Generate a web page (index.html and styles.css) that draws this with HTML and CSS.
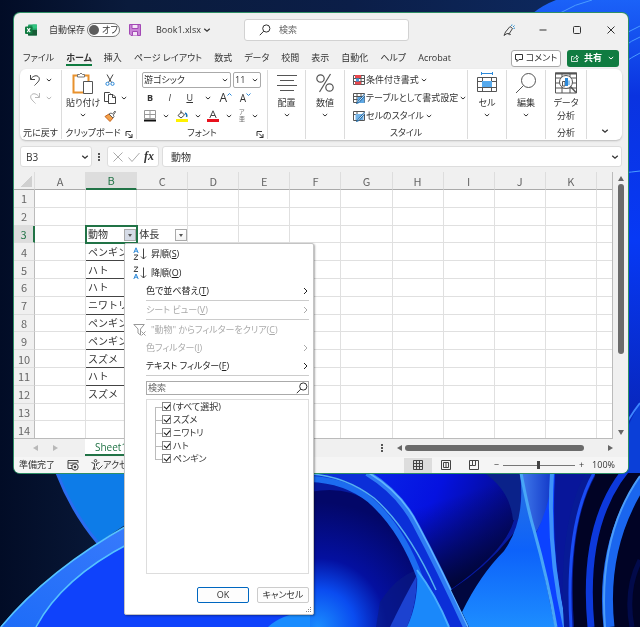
FILE: index.html
```html
<!DOCTYPE html>
<html lang="ja">
<head>
<meta charset="utf-8">
<title>Book1.xlsx</title>
<link rel="stylesheet" href="styles.css">
</head>
<body>
<svg class="wallpaper" viewBox="0 0 640 627" preserveAspectRatio="xMidYMid slice" aria-hidden="true">
  <defs>
    <linearGradient id="base" x1="0" x2="1" y1="0" y2="0"><stop offset="0" stop-color="#020c26"/><stop offset=".2" stop-color="#0a1b3c"/><stop offset=".55" stop-color="#0b1e48"/><stop offset="1" stop-color="#0e2c66"/></linearGradient>
    <linearGradient id="side" x1="0" x2="0" y1="0" y2="1"><stop offset="0" stop-color="#1b62f8"/><stop offset=".2" stop-color="#0a33e0"/><stop offset=".5" stop-color="#0739f5"/><stop offset="1" stop-color="#0820a8"/></linearGradient>
    <linearGradient id="petal" x1="0" x2="1" y1="1" y2="0"><stop offset="0" stop-color="#1d6cf8"/><stop offset="1" stop-color="#4f86ff"/></linearGradient>
    <radialGradient id="deep" gradientUnits="userSpaceOnUse" cx="318" cy="627" r="125"><stop offset="0" stop-color="#1a8cff"/><stop offset=".3" stop-color="#0a4cf0"/><stop offset=".55" stop-color="#0410a0"/><stop offset="1" stop-color="#030768"/></radialGradient>
    <linearGradient id="fold" x1="0" x2="1" y1="0" y2=".4"><stop offset="0" stop-color="#0824e8"/><stop offset=".45" stop-color="#0512e0"/><stop offset="1" stop-color="#050a80"/></linearGradient>
    <linearGradient id="foldshade" x1=".2" x2=".6" y1="0" y2="1"><stop offset=".3" stop-color="#00054a" stop-opacity="0"/><stop offset="1" stop-color="#00052e"/></linearGradient>
    <linearGradient id="bright" x1="0" x2="0" y1="0" y2="1"><stop offset="0" stop-color="#2a73e0"/><stop offset=".5" stop-color="#0d62fa"/><stop offset="1" stop-color="#1d8dff"/></linearGradient>
    <linearGradient id="haze" x1="0" x2="1" y1="0" y2="0"><stop offset="0" stop-color="#3f78ea"/><stop offset="1" stop-color="#1238c8"/></linearGradient>
  </defs>
  <rect width="640" height="627" fill="url(#base)"/>
  <path d="M533 13 Q543 5 556 0H640V480H500Z" fill="url(#side)"/>
  <path d="M560 13Q575 4 592 0M620 38Q630 30 640 26M622 48Q632 40 640 37M622 64Q632 57 640 53M622 173Q632 172 640 171" fill="none" stroke="#4a9cff" stroke-width="1"/>
  <path d="M57 473Q72 512 98 543L140 515V473Z" fill="#0d7ce8"/>
  <path d="M57 473Q72 512 98 543" fill="none" stroke="#2b6df0" stroke-width="3"/>
  <path d="M0 627Q48 570 130 524V473H320V627Z" fill="url(#petal)"/>
  <path d="M36 627Q62 578 130 543L320 480V627Z" fill="#0f42fb"/>
  <path d="M1 627Q48 570 130 524M36 627Q62 578 130 543" fill="none" stroke="#55c3ff" stroke-width="1.5"/>
  <path d="M268 627Q280 615 310 610H330V627Z" fill="#1a8cff"/>
  <rect x="310" y="470" width="330" height="157" fill="#071aa0"/>
  <path d="M370 473H500Q518 500 514 520Q505 552 450 590Q430 560 408 520Q390 488 370 473Z" fill="url(#fold)"/>
  <path d="M370 473H500Q518 500 514 520Q505 552 450 590Q430 560 408 520Q390 488 370 473Z" fill="url(#foldshade)"/>
  <path d="M484 473H520V520L513 520Q510 490 484 473Z" fill="#0a228a"/>
  <path d="M310 473H367Q400 493 416 525Q440 570 466 627H407Q417 600 417 572Q400 520 370 502Q345 483 310 481Z" fill="#0b2fd8"/>
  <path d="M310 492Q345 485 370 502Q400 525 417 572Q418 602 407 627H310Z" fill="url(#deep)"/>
  <path d="M380 602Q396 577 417 570Q418 602 407 627H376Z" fill="#0a1a80" opacity=".6"/>
  <path d="M417 575Q405 596 390 627H407Q417 605 417 575Z" fill="#1c42d0"/>
  <path d="M310 479Q345 480 370 500Q402 528 420 578" fill="none" stroke="#1c6cf0" stroke-width="6"/>
  <path d="M310 474Q345 476 374 498Q408 528 436 590" fill="none" stroke="#55b0f0" stroke-width="1.5"/>
  <path d="M367 473Q400 493 416 525Q440 570 466 627" fill="none" stroke="#2f7cf5" stroke-width="6"/>
  <path d="M369 473Q402 493 418 525Q442 570 468 627" fill="none" stroke="#62b6ff" stroke-width="1.500"/>
  <path d="M417 570Q436 595 449 627H407Q419 602 417 570Z" fill="#1a88fa"/>
  <path d="M417 570Q436 595 449 627" fill="none" stroke="#48adff" stroke-width="2"/>
  <path d="M451 590Q490 565 516 530L520 627H469Z" fill="#01073f"/>
  <path d="M520 473Q526 520 504 551Q480 575 462 612L469 627H555Q545 580 534 520Q528 490 523 473Z" fill="url(#bright)"/>
  <path d="M522 473H552Q552 510 534 535Z" fill="url(#haze)"/>
  <path d="M552 473Q550 508 535 535Q550 590 557 627H567Q550 560 555 473Z" fill="#0c42ff"/>
  <path d="M521 473Q528 510 534 530Q548 580 556 627" fill="none" stroke="#48a6f7" stroke-width="3"/>
  <path d="M552 473Q547 550 565 627" fill="none" stroke="#3d92fa" stroke-width="4"/>
  <path d="M556 473H595Q562 530 566 627Q552 550 556 473Z" fill="#08169a"/>
  <path d="M595 473H640V627H566Q558 540 595 473Z" fill="#010325"/>
  <path d="M591 473Q562 525 569 627" fill="none" stroke="#071a96" stroke-width="10"/>
  <path d="M594 473Q565 525 571 627" fill="none" stroke="#1a4df5" stroke-width="3"/>
  <path d="M640 455Q580 510 591 627" fill="none" stroke="#0d39dc" stroke-width="7"/>
  <path d="M643 480Q600 545 609 627" fill="none" stroke="#1a66ef" stroke-width="11"/>
  <path d="M640 476Q598 535 605 627" fill="none" stroke="#4b9dfa" stroke-width="2"/>
  <path d="M640 403Q618 440 618 473H640Z" fill="#0b3fd8"/>
  <path d="M640 403Q628 418 618 440" fill="none" stroke="#3d86ff" stroke-width="2"/>
  <path d="M640 560Q625 590 632 627" fill="none" stroke="#020a4a" stroke-width="5"/>
</svg>

<svg class="defs" aria-hidden="true">
  <symbol id="chev" viewBox="0 0 8 8"><path d="M1.800 3 4 5 6.200 3" fill="none" stroke="currentColor"/></symbol>
  <symbol id="lens" viewBox="0 0 12 12"><circle cx="7.3" cy="4.5" r="3.6" fill="none" stroke="currentColor"/><path d="M4.7 7.2.8 11.2" stroke="currentColor"/></symbol>
  <symbol id="launch" viewBox="0 0 8 8"><path d="M1 6V1.5h5M3 3.5l4 4M7 4v3.500H3.500" fill="none" stroke="currentColor"/></symbol>
</svg>

<main class="window">
  <header class="title">
    <div class="title-left">
      <svg class="i12" viewBox="0 0 12 12"><rect x="3" y=".5" width="9" height="11" rx="1" fill="#21a366"/><path d="M7.500.5H12v4H7.500z" fill="#33c481"/><path d="M3 6h9v5.500H3z" fill="#185c37"/><rect y="2.500" width="7.500" height="7.500" rx="1" fill="#107c41"/><path d="m2.200 4.200 3 4m0-4-3 4" stroke="#fff" stroke-width="1.100"/></svg>
      <label class="auto"><span>自動保存</span><input type="checkbox" class="switch-input"><span class="switch"><i></i><span>オフ</span></span></label>
      <button class="plain" aria-label="上書き保存"><svg class="i12" viewBox="0 0 12 12"><path d="M.5.5h11v11H2L.5 10z" fill="#c884d6" stroke="#a349b5"/><path d="M3 .5h6v4H3zM3.500 11.500v-4h5v4" fill="#f3e6f6" stroke="#a349b5"/></svg></button>
      <button class="plain book">Book1.xlsx <svg class="i10"><use href="#chev"/></svg></button>
    </div>
    <label class="search"><svg class="i12"><use href="#lens"/></svg><input type="text" aria-label="検索" placeholder="検索"></label>
    <div class="title-right">
      <button class="plain" aria-label="ペン"><svg class="i12" viewBox="0 0 12 12"><path d="M1 11.500 2.500 8 7 2.500l2.500 2L6 10l-2-.5zM5 9c1 2 2 2 3 1" fill="none" stroke="#444"/><path d="M8.500 2 9 .5M10 3l1.500-1.500M10.500 4.500l1.500-.5" stroke="#2b8fd0"/></svg></button>
      <button class="plain" aria-label="最小化"><svg class="i12" viewBox="0 0 12 12"><path d="M2.500 6h7" stroke="#333"/></svg></button>
      <button class="plain" aria-label="最大化"><svg class="i12" viewBox="0 0 12 12"><rect x="2.500" y="2.500" width="7" height="7" rx="1" fill="none" stroke="#333"/></svg></button>
      <button class="plain" aria-label="閉じる"><svg class="i12" viewBox="0 0 12 12"><path d="m2.500 2.500 7 7m0-7-7 7" stroke="#333"/></svg></button>
    </div>
  </header>

  <nav class="tabs">
    <a href="#">ファイル</a><a href="#" class="on">ホーム</a><a href="#">挿入</a><a href="#">ページ レイアウト</a><a href="#">数式</a><a href="#">データ</a><a href="#">校閲</a><a href="#">表示</a><a href="#">自動化</a><a href="#">ヘルプ</a><a href="#">Acrobat</a>
    <button class="comment"><svg class="i8" viewBox="0 0 8 8"><path d="M.5.5h7v5H4l-2 2v-2H.5z" fill="none" stroke="#333"/></svg>コメント</button>
    <button class="share"><svg class="i8" viewBox="0 0 8 8"><path d="M2.500 2.500h-2v5h6v-2M2.500 5.500q.5-2.500 3-2.500V1.200L7.500 3.500 5.500 5.500V4.200" fill="none" stroke="#fff" stroke-width=".8"/></svg>共有<svg class="i8"><use href="#chev"/></svg></button>
  </nav>

  <section class="ribbon">
    <div class="group">
      <div class="body">
        <div class="row center"><svg class="i12" viewBox="0 0 12 12"><path d="M1.500 1v4.500H6M1.700 5.200C4 1.500 8 .7 9.800 3.200 11.500 6 9 8 5.500 11.500" fill="none" stroke="#444"/></svg><svg class="i8"><use href="#chev"/></svg></div>
        <div class="row center off"><svg class="i12" viewBox="0 0 12 12"><path d="M10.500 1v4.500H6M10.300 5.200C8 1.500 4 .7 2.200 3.200.5 6 3 8 6.500 11.500" fill="none" stroke="currentColor"/></svg><svg class="i8"><use href="#chev"/></svg></div>
      </div>
      <footer>元に戻す</footer>
    </div>
    <div class="group">
      <div class="body clip">
        <button class="big"><svg class="i22" viewBox="0 0 22 22"><rect x="1.500" y="3.500" width="15" height="17" fill="#fff" stroke="#e8912d" stroke-width="2"/><path d="M5.500 5V2.500h2q1.500-3 3 0h2V5z" fill="#fff" stroke="#777"/><path d="M11.500 9.500h9v12h-9z" fill="#fff" stroke="#555"/></svg><span>貼り付け</span><svg class="i8"><use href="#chev"/></svg></button>
        <div class="stack">
          <div class="row"><svg class="i12" viewBox="0 0 12 12"><path d="m3 .5 4.500 8M9 .5l-4.500 8" stroke="#444"/><circle cx="3.500" cy="9.800" r="1.600" fill="none" stroke="#2b88d8"/><circle cx="8.500" cy="9.800" r="1.600" fill="none" stroke="#2b88d8"/></svg></div>
          <div class="row"><svg class="i12" viewBox="0 0 12 12"><path d="M4 9.500H.5v-9h5l1 1M4.500 2.500H9l2.500 2.500v6.500h-7zM8.500 2.500V5.500h3" fill="none" stroke="#444"/></svg><svg class="i8"><use href="#chev"/></svg></div>
          <div class="row"><svg class="i12" viewBox="0 0 12 12"><path d="M1 6.500 5 4l4 4-3 3.500z" fill="#f2a04a" stroke="#c8641a"/><path d="m5 4 2-1 1.500 1L11 1l.5 1L9.300 5 10 6.500 9 8z" fill="#fff" stroke="#444" stroke-width=".8"/></svg></div>
        </div>
      </div>
      <footer class="with-launch">クリップボード<svg class="i8 launch"><use href="#launch"/></svg></footer>
    </div>
    <div class="group">
      <div class="body font">
        <div class="row selects">
          <label class="pick wide"><select aria-label="フォント"><option>游ゴシック</option></select><svg class="i8"><use href="#chev"/></svg></label>
          <label class="pick"><select aria-label="サイズ"><option>11</option></select><svg class="i8"><use href="#chev"/></svg></label>
        </div>
        <div class="row tools"><button class="plain b">B</button><button class="plain it">I</button><button class="plain u">U</button><svg class="i8"><use href="#chev"/></svg><button class="plain a">A<svg class="i5" viewBox="0 0 5 5"><path d="M.5 3.500l2-2 2 2" fill="none" stroke="#2b88d8"/></svg></button><button class="plain a small">A<svg class="i5" viewBox="0 0 5 5"><path d="M.5 1.500l2 2 2-2" fill="none" stroke="#2b88d8"/></svg></button><span></span></div>
        <div class="row tools">
          <svg class="i12" viewBox="0 0 12 12"><path d="M.5.500h11v8H.5zM6 .5v8M.5 4.500h11" fill="none" stroke="#999"/><path d="M0 10.500h12" stroke="#111" stroke-width="2"/></svg><svg class="i8"><use href="#chev"/></svg>
          <svg class="i12" viewBox="0 0 12 12"><path d="M2 5.500 5.500 2 8.500 5 5 8zM5 .5v3" fill="#fff" stroke="#444"/><path d="M9 3q2.500 1 1.500 4" fill="none" stroke="#1673b8" stroke-width="1.500"/><path d="M0 10.500h12" stroke="#fff200" stroke-width="3"/></svg><svg class="i8"><use href="#chev"/></svg>
          <svg class="i12" viewBox="0 0 12 12"><path d="M2.800 8 6 .8 9.200 8M4 5.500h4" fill="none" stroke="#444"/><path d="M0 10.500h12" stroke="#e8101c" stroke-width="3"/></svg><svg class="i8"><use href="#chev"/></svg>
          <span class="ruby"><span>ア</span><span>亜</span></span><svg class="i8"><use href="#chev"/></svg>
        </div>
      </div>
      <footer>フォント<svg class="i8 launch"><use href="#launch"/></svg></footer>
    </div>
    <div class="group">
      <button class="big"><svg class="i22" viewBox="0 0 22 22"><path d="M1 3.500h20M4 8.500h14M1 13.500h20M4 18.500h14" stroke="#555"/></svg><span>配置</span><svg class="i8"><use href="#chev"/></svg></button>
    </div>
    <div class="group">
      <button class="big"><svg class="i22" viewBox="0 0 22 22"><circle cx="6.500" cy="6.500" r="3.700" fill="none" stroke="#555" stroke-width="1.200"/><circle cx="15.500" cy="15.500" r="3.700" fill="none" stroke="#555" stroke-width="1.200"/><path d="M16.500 2 5.500 20" stroke="#555" stroke-width="1.200"/></svg><span>数値</span><svg class="i8"><use href="#chev"/></svg></button>
    </div>
    <div class="group">
      <div class="body styles">
        <div class="row"><svg class="i12" viewBox="0 0 12 12"><path d="M.5 1.500h11v9H.5zM.5 4.500h11M.5 7.500h11M4 1.500v9M8 1.500v9" fill="#fff" stroke="#555"/><path d="M2 1h6v3H2zM2 7.500h6v3H2z" fill="#e9474e"/><path d="M3 4.500h3v3H3z" fill="#4a9be0"/></svg>条件付き書式<svg class="i8"><use href="#chev"/></svg></div>
        <div class="row"><svg class="i12" viewBox="0 0 12 12"><path d="M.5 1.500h11v9H.5zM.5 4.500h11M.5 7.500h11M4 1.500v9M8 1.500v9" fill="#fff" stroke="#555"/><path d="M4.500 5h7v6h-7z" fill="#5fa8e4"/><path d="M11.500 2 5 9.500l-1.500 2 2.500-1L12 3.500" fill="#fff" stroke="#1764a5"/></svg>テーブルとして書式設定<svg class="i8"><use href="#chev"/></svg></div>
        <div class="row"><svg class="i12" viewBox="0 0 12 12"><path d="M.5 1.500h11v9H.5zM.5 4.500h11M4 1.500v9" fill="#fff" stroke="#555"/><path d="M2.500 4h8v6h-8z" fill="#76b5e8"/><path d="M11.500 2 5 9.500l-1.500 2 2.500-1L12 3.500" fill="#fff" stroke="#1764a5"/></svg>セルのスタイル<svg class="i8"><use href="#chev"/></svg></div>
      </div>
      <footer>スタイル</footer>
    </div>
    <div class="group">
      <button class="big"><svg class="i22" viewBox="0 0 22 22"><path d="M1.500 5.500h19v14h-19zM1.500 9.500h19M1.500 15.500h19M6.500 5.500v14M15.500 5.500v14" fill="#fff" stroke="#555"/><path d="M6 9h10v6H6z" fill="#56a9ec"/><path d="M5.500 1.500h11M5.500 0v3M16.500 0v3" stroke="#2b88d8"/></svg><span>セル</span><svg class="i8"><use href="#chev"/></svg></button>
    </div>
    <div class="group">
      <button class="big"><svg class="i22" viewBox="0 0 22 22"><circle cx="13.500" cy="8.500" r="7" fill="none" stroke="#555"/><path d="M8.500 13.500 1 21" stroke="#555"/></svg><span>編集</span><svg class="i8"><use href="#chev"/></svg></button>
    </div>
    <div class="group">
      <button class="big"><svg class="i22" viewBox="0 0 22 22"><path d="M.5 1h21v20H.5zM.5 6h21M.5 11h21M.5 16h21M7 1v20M15 1v20" fill="#fff" stroke="#555"/><path d="M0 1.500h22" stroke="#555" stroke-width="2"/><circle cx="11" cy="10" r="6.500" fill="#fff" stroke="#555"/><path d="m15.500 14.500 5.500 6" stroke="#555" stroke-width="1.500"/><path d="M7.500 9.500H10V14H7.500z" fill="#fff" stroke="#555"/><path d="M10 6h3v8h-3z" fill="#2b88d8"/><path d="M13 8.500h2V13h-2z" fill="#9ccbf0"/></svg><span>データ<br>分析</span></button>
      <footer>分析</footer>
    </div>
    <div class="group last"><button class="plain" aria-label="リボンの表示"><svg class="i10"><use href="#chev"/></svg></button></div>
  </section>

  <section class="formula">
    <label class="namebox"><input type="text" aria-label="名前ボックス" value="B3"><svg class="i10"><use href="#chev"/></svg></label>
    <span class="dots"></span>
    <div class="fx"><svg class="i12" viewBox="0 0 12 12"><path d="m1.500 1.500 9 9m0-9-9 9" stroke="#aaa"/></svg><svg class="i12" viewBox="0 0 12 12"><path d="m.5 6.500 3.500 4 7.500-8.500" fill="none" stroke="#aaa"/></svg><i>fx</i></div>
    <label class="entry"><input type="text" aria-label="数式バー" value="動物"><svg class="i10"><use href="#chev"/></svg></label>
  </section>

  <section class="sheet">
    <table>
      <colgroup><col class="rowhead"><col><col><col><col><col><col><col><col><col><col><col><col class="tail"></colgroup>
      <thead><tr><th class="corner"></th><th>A</th><th class="sel">B</th><th>C</th><th>D</th><th>E</th><th>F</th><th>G</th><th>H</th><th>I</th><th>J</th><th>K</th><th></th></tr></thead>
      <tbody>
        <tr><th>1</th><td></td><td></td><td></td><td></td><td></td><td></td><td></td><td></td><td></td><td></td><td></td><td></td></tr>
        <tr><th>2</th><td></td><td></td><td></td><td></td><td></td><td></td><td></td><td></td><td></td><td></td><td></td><td></td></tr>
        <tr><th class="sel">3</th><td></td><td class="active"><div class="cell">動物<button class="filter on" aria-label="動物 フィルター"></button></div></td><td><div class="cell">体長<button class="filter" aria-label="体長 フィルター"></button></div></td><td></td><td></td><td></td><td></td><td></td><td></td><td></td><td></td><td></td></tr>
        <tr><th>4</th><td></td><td class="line">ペンギン</td><td></td><td></td><td></td><td></td><td></td><td></td><td></td><td></td><td></td><td></td></tr>
        <tr><th>5</th><td></td><td class="line">ハト</td><td></td><td></td><td></td><td></td><td></td><td></td><td></td><td></td><td></td><td></td></tr>
        <tr><th>6</th><td></td><td class="line">ハト</td><td></td><td></td><td></td><td></td><td></td><td></td><td></td><td></td><td></td><td></td></tr>
        <tr><th>7</th><td></td><td class="line">ニワトリ</td><td></td><td></td><td></td><td></td><td></td><td></td><td></td><td></td><td></td><td></td></tr>
        <tr><th>8</th><td></td><td class="line">ペンギン</td><td></td><td></td><td></td><td></td><td></td><td></td><td></td><td></td><td></td><td></td></tr>
        <tr><th>9</th><td></td><td class="line">ペンギン</td><td></td><td></td><td></td><td></td><td></td><td></td><td></td><td></td><td></td><td></td></tr>
        <tr><th>10</th><td></td><td class="line">スズメ</td><td></td><td></td><td></td><td></td><td></td><td></td><td></td><td></td><td></td><td></td></tr>
        <tr><th>11</th><td></td><td class="line">ハト</td><td></td><td></td><td></td><td></td><td></td><td></td><td></td><td></td><td></td><td></td></tr>
        <tr><th>12</th><td></td><td>スズメ</td><td></td><td></td><td></td><td></td><td></td><td></td><td></td><td></td><td></td><td></td></tr>
        <tr><th>13</th><td></td><td></td><td></td><td></td><td></td><td></td><td></td><td></td><td></td><td></td><td></td><td></td></tr>
        <tr><th>14</th><td></td><td></td><td></td><td></td><td></td><td></td><td></td><td></td><td></td><td></td><td></td><td></td></tr>
      </tbody>
    </table>
    <div class="vbar"><i class="up"></i><b></b><i class="down"></i></div>
  </section>

  <section class="sheetbar">
    <div class="arrows"><i class="left"></i><i class="right"></i></div>
    <a href="#" class="sheettab">Sheet1</a>
    <span class="dots"></span>
    <div class="hbar"><i class="left"></i><b></b><i class="right"></i></div>
  </section>

  <footer class="status">
    <span>準備完了</span>
    <svg class="i12" viewBox="0 0 12 12"><path d="M1 1.500h10M1 1.500v8h4M1 4h9M3.500 6.500H5M11 1.500V4" fill="none" stroke="#444"/><circle cx="8" cy="8" r="3.200" fill="none" stroke="#444"/><circle cx="8" cy="8" r="1.300" fill="#444"/></svg>
    <span class="acc"><svg class="i12" viewBox="0 0 12 12"><circle cx="4.500" cy="1.700" r="1.200" fill="none" stroke="#444"/><path d="M.5 3.500 3.500 4.500V7L2 11M8.500 3.500 5.500 4.500V7M6 8.500l1.500 2 4-4M3.500 8 4 11" fill="none" stroke="#444"/></svg>アクセシビリティ</span>
    <div class="views">
      <button class="plain on" aria-label="標準"><svg class="i10" viewBox="0 0 10 10"><path d="M.5.500h9v9h-9zM.5 3.500h9M.5 6.500h9M3.500.5v9M6.500.5v9" fill="none" stroke="#444"/></svg></button>
      <button class="plain" aria-label="ページ レイアウト"><svg class="i10" viewBox="0 0 10 10"><path d="M.5.500h9v9h-9zM2.500 2.500h5v5h-5zM4 4h2M4 6h2" fill="none" stroke="#444"/></svg></button>
      <button class="plain" aria-label="改ページ プレビュー"><svg class="i10" viewBox="0 0 10 10"><path d="M.5.500h9v9h-9zM3.500.5V5.500H.5M6.500.5v5h-3" fill="none" stroke="#444"/></svg></button>
    </div>
    <div class="zoom"><span>−</span><input type="range" aria-label="ズーム" min="10" max="190" value="100"><span>+</span></div>
    <span class="percent">100%</span>
  </footer>

  <div class="menu" role="menu">
    <button class="item lead"><svg class="i14" viewBox="0 0 14 14"><path d="M.8 6 3 .8 5.200 6M1.600 4.200h2.800" fill="none" stroke="#2b88d8"/><path d="M1 8h4L1 12.500h4M10.500 1.500v10.500M8 9.500l2.500 2.500L13 9.500" fill="none" stroke="#444"/></svg><span>昇順(<u>S</u>)</span></button>
    <button class="item lead"><svg class="i14" viewBox="0 0 14 14"><path d="M.8 13 3 8l2.200 5M1.600 11.200h2.800" fill="none" stroke="#2b88d8"/><path d="M1 1h4L1 5.500h4M10.500 1.500v10.500M8 9.500l2.500 2.500L13 9.500" fill="none" stroke="#444"/></svg><span>降順(<u>O</u>)</span></button>
    <button class="item sub"><span>色で並べ替え(<u>T</u>)</span><svg class="i8" viewBox="0 0 8 8"><path d="m3 1 3 3-3 3" fill="none" stroke="currentColor"/></svg></button>
    <hr>
    <button class="item sub" disabled><span>シート ビュー(<u>V</u>)</span><svg class="i8" viewBox="0 0 8 8"><path d="m3 1 3 3-3 3" fill="none" stroke="currentColor"/></svg></button>
    <hr>
    <button class="item lead" disabled><svg class="i14" viewBox="0 0 14 14"><path d="M.8 1.500h10.500L7.500 6v6L5 10V6zM8.500 8.500l4 4m0-4-4 4" fill="none" stroke="#999"/></svg><span>"動物" からフィルターをクリア(<u>C</u>)</span></button>
    <button class="item sub" disabled><span>色フィルター(<u>I</u>)</span><svg class="i8" viewBox="0 0 8 8"><path d="m3 1 3 3-3 3" fill="none" stroke="currentColor"/></svg></button>
    <button class="item sub"><span>テキスト フィルター(<u>F</u>)</span><svg class="i8" viewBox="0 0 8 8"><path d="m3 1 3 3-3 3" fill="none" stroke="currentColor"/></svg></button>
    <hr>
    <label class="find"><input type="text" aria-label="検索" placeholder="検索"><svg class="i12"><use href="#lens"/></svg></label>
    <div class="list">
      <label><input type="checkbox" checked>(すべて選択)</label>
      <label><input type="checkbox" checked>スズメ</label>
      <label><input type="checkbox" checked>ニワトリ</label>
      <label><input type="checkbox" checked>ハト</label>
      <label><input type="checkbox" checked>ペンギン</label>
    </div>
    <div class="actions"><button class="ok">OK</button><button>キャンセル</button></div>
    <svg class="grip" viewBox="0 0 6 6"><path d="M4 0h1v1H4zM4 2h1v1H4zM4 4h1v1H4zM2 2h1v1H2zM2 4h1v1H2zM0 4h1v1H0z" fill="#888"/></svg>
  </div>
</main>
</body>
</html>
```
FILE: styles.css
```css
* { box-sizing: border-box; }
body {
  margin: 0;
  padding: 13px 12px 0 14px;
  min-height: 100vh;
  background: #0a1b3c;
  color: #333;
  font: 9px/12px "Open Sans", "Noto Sans CJK JP", sans-serif;
  font-feature-settings: "palt";
}
button, input, select { font: inherit; font-feature-settings: inherit; color: inherit; margin: 0; padding: 0; }
button { border: 0; background: none; white-space: nowrap; }
input { border: 0; background: none; outline: 0; min-width: 0; }
svg { display: block; flex: none; }
a { color: inherit; text-decoration: none; }
.wallpaper { position: fixed; inset: 0; width: 100%; height: 100%; z-index: -1; }
.defs { position: absolute; width: 0; height: 0; }
.i5 { width: 5px; height: 5px; }
.i8 { width: 8px; height: 8px; }
.i10 { width: 10px; height: 10px; }
.i12 { width: 12px; height: 12px; }
.i14 { width: 14px; height: 14px; }
.i22 { width: 22px; height: 22px; }
.plain { display: flex; align-items: center; justify-content: center; }

.window {
  position: relative;
  background: #f0f0f0;
  border-radius: 6px;
  box-shadow: 0 0 0 1px #2f8f66;
}

/* title bar */
.title { display: grid; grid-template-columns: 230fr 165fr 219fr; height: 34px; align-items: center; }
.title-left { display: flex; align-items: center; padding-left: 11px; white-space: nowrap; }
.auto { display: flex; align-items: center; gap: 2px; margin: 0 9px 0 12px; }
.switch-input { position: absolute; opacity: 0; }
.switch { display: flex; align-items: center; gap: 3px; width: 33px; height: 14px; padding-left: 1px; border: 1px solid #777; border-radius: 7px; background: #fff; }
.switch i { width: 10px; height: 10px; border-radius: 5px; background: #5c5c5c; }
.book { gap: 1px; margin-left: 15px; }
.search { display: flex; align-items: center; gap: 8px; height: 22px; padding: 0 14px; background: #fff; border: 1px solid #d2d2d2; border-radius: 3px; }
.search input { flex: 1; }
::placeholder { color: #666; opacity: 1; }
.title-right { display: flex; justify-content: flex-end; gap: 22px; padding-right: 11px; }

/* tabs */
.tabs { display: flex; align-items: center; gap: 12px; height: 22px; padding: 0 9px; white-space: nowrap; }
.tabs a { padding: 2px 0 0; border-bottom: 2px solid transparent; }
.tabs .on { font-weight: 700; border-color: #107c41; }
.comment, .share { display: flex; align-items: center; justify-content: center; gap: 3px; height: 17px; border-radius: 3px; }
.comment { width: 50px; margin-left: auto; border: 1px solid #aaa; background: #fff; }
.share { width: 52px; margin-left: -6px; gap: 5px; background: #107c41; color: #fff; font-weight: 700; }

/* ribbon */
.ribbon {
  display: grid;
  grid-template-columns: 42fr 75fr 131fr 38fr 39fr 123fr 39fr 39fr 41fr 35fr;
  height: 71px;
  margin: 0 6px;
  padding: 1px 0;
  background: #fff;
  border-radius: 6px;
  box-shadow: 0 1px 2px #bbb;
}
.group { position: relative; display: flex; flex-direction: column; align-items: stretch; min-width: 0; padding-top: 1px; border-right: 1px solid #dcdcdc; white-space: nowrap; }
.group footer { position: relative; display: flex; justify-content: center; margin-top: auto; line-height: 12px; }
.group .with-launch { padding-right: 12px; }
.launch { position: absolute; right: 3px; bottom: 1px; }
.row { display: flex; align-items: center; gap: 4px; height: 18px; }
.center { justify-content: center; }
.off { color: #b5b5b5; }
.clip { display: flex; justify-content: space-between; padding: 0 6px 0 4px; }
.stack { width: 26px; }
.big { display: flex; flex-direction: column; align-items: center; gap: 2px; padding-top: 1px; line-height: 13px; }
.font { padding: 0 6px 0 5px; }
.selects { gap: 2px; }
.pick { position: relative; display: flex; align-items: center; width: 28px; height: 16px; border: 1px solid #aaa; border-radius: 2px; }
.pick select { width: 100%; height: 14px; border: 0; padding-left: 1px; background: none; appearance: none; outline: 0; }
.pick svg { position: absolute; right: 1px; }
.wide { flex: 1; }
.tools { justify-content: space-between; gap: 2px; padding: 0 2px; }
.b { font-weight: 700; width: 12px; }
.it { font-style: italic; width: 12px; }
.u { text-decoration: underline; width: 12px; }
.a { font-size: 12px; }
.small { font-size: 10px; }
.a svg { align-self: flex-start; }
.ruby { display: flex; flex-direction: column; font-size: 6px; line-height: 7px; color: #777; }
.styles { padding-left: 8px; }
.styles .row { gap: 1px; }
.last { border: 0; align-items: center; justify-content: flex-end; padding-bottom: 3px; }

/* formula bar */
.formula { display: flex; align-items: center; height: 21px; margin: 6px 6px 5px; }
.formula > label, .fx { display: flex; align-items: center; height: 21px; background: #fff; border: 1px solid #ddd; border-radius: 3px; }
.namebox { width: 72px; padding: 0 1px 0 5px; }
.namebox input { flex: 1; font-size: 10px; }
.dots { width: 2px; height: 8px; margin: 0 7px 0 6px; border-left: 2px dotted #555; }
.fx { width: 52px; justify-content: space-between; padding: 0 4px; }
.fx i { font: italic 700 12px "Liberation Serif", serif; }
.entry { flex: 1; margin-left: 3px; padding: 0 1px 0 8px; }
.entry input { flex: 1; font-size: 10px; }

/* grid */
.sheet { display: flex; }
table { width: 100%; min-width: 0; height: 267px; table-layout: fixed; border-collapse: separate; border-spacing: 0; font: 11px/14px "Noto Sans CJK JP", sans-serif; border-right: 1px solid #bbb; border-bottom: 1px solid #bbb; }
.rowhead { width: 21px; }
.tail { width: 15px; }
th, td { padding: 0; font-weight: 400; overflow: hidden; white-space: nowrap; }
thead th { height: 18px; border-right: 1px solid #ddd; border-bottom: 1px solid #aaa; color: #666; }
tbody th { border-right: 1px solid #bbb; border-bottom: 1px solid #ddd; color: #666; }
td { padding-left: 2px; background: #fff; border-right: 1px solid #e0e0e0; border-bottom: 1px solid #e0e0e0; font-size: 10px; font-feature-settings: normal; }
tr > :last-child { border-right: 0; }
tbody tr:last-child > * { border-bottom: 0; }
thead .sel { background: #ddd; color: #217346; border-bottom: 2px solid #217346; }
tbody .sel { background: #ddd; color: #217346; border-right: 2px solid #217346; }
.corner { background: linear-gradient(135deg, transparent 62%, #d0d0d0 62%) no-repeat 0 2px / 18px 13px; }
.line { border-bottom-color: #444; }
.active { outline: 2px solid #217346; outline-offset: -1px; }
.cell { display: flex; justify-content: space-between; align-items: flex-end; height: 14px; line-height: 14px; }
.filter { width: 12px; height: 12px; border: 1px solid #aaa; background: linear-gradient(#fff, #f4f4f4); }
.filter::after { content: ""; display: block; width: 0; margin: 1px auto 0; border: 2px solid transparent; border-top: 3px solid #555; border-bottom: 0; }
.filter.on { background: #d5dbe6; }

/* scroll bars */
.vbar { display: flex; flex: none; flex-direction: column; align-items: center; width: 15px; padding: 4px 0; }
.vbar b { width: 6px; height: 170px; margin: 3px 0 auto; border-radius: 3px; background: #6b6b6b; }
.up, .down, .left, .right { width: 0; height: 0; border: 3px solid transparent; }
.up { border-bottom: 5px solid #666; border-top: 0; }
.down { border-top: 5px solid #666; border-bottom: 0; }
.left { border-right: 5px solid #666; border-left: 0; }
.right { border-left: 5px solid #666; border-right: 0; }
.sheetbar { display: flex; align-items: center; height: 18px; }
.arrows { display: flex; justify-content: center; gap: 15px; width: 71px; padding-right: 8px; opacity: .4; }
.sheettab { width: 56px; height: 17px; padding-left: 10px; align-self: flex-start; background: #fff; border-bottom: 2px solid #217346; color: #217346; line-height: 16px; font-size: 10px; }
.sheetbar .dots { margin: 0 14px 0 auto; }
.hbar { display: flex; align-items: center; width: 216px; margin-right: 15px; }
.hbar b { flex: 1; height: 6px; margin: 0 24px 0 3px; border-radius: 3px; background: #6b6b6b; }

/* status bar */
.status { display: flex; align-items: center; height: 16px; padding: 0 13px 0 5px; background: #f5f5f5; border-radius: 0 0 6px 6px; white-space: nowrap; }
.status > svg { margin: 0 12px; }
.acc { display: flex; align-items: center; }
.views { display: flex; margin-left: auto; }
.views button { width: 28px; height: 15px; }
.views .on { background: #ddd; }
.zoom { display: flex; align-items: center; gap: 4px; margin: 0 8px 0 6px; }
.zoom input { width: 72px; height: 10px; appearance: none; background: linear-gradient(#777, #777) no-repeat center / 100% 1px; }
.zoom input::-webkit-slider-thumb { appearance: none; width: 3px; height: 8px; background: #444; }

/* filter menu */
.menu {
  position: absolute;
  left: 110px;
  top: 230px;
  width: 190px;
  height: 372px;
  display: flex;
  flex-direction: column;
  padding: 0 4px 11px 8px;
  background: #fff;
  border: 1px solid #c4c4c4;
  border-radius: 2px;
  box-shadow: 1px 1px 2px #0005;
}
.item { display: flex; align-items: center; height: 18px; color: #222; text-align: left; }
.item:disabled { color: #aaa; }
.lead { gap: 4px; height: 19px; }
.sub { justify-content: space-between; padding-left: 13px; }
hr { width: 100%; margin: 0; padding-left: 13px; border: 0; height: 1px; background: #ccc content-box; }
.find { display: flex; align-items: center; height: 14px; margin: 5px 0 4px 13px; border: 1px solid #aaa; }
.find input { flex: 1; height: 12px; padding-left: 1px; }
.list { flex: 1; margin-left: 13px; padding: 0 0 0 15px; border: 1px solid #ddd; }
.list label { position: relative; display: flex; align-items: center; gap: 2px; height: 13px; }
.list label::before { content: ""; position: absolute; left: -7px; top: -6px; width: 7px; height: 13px; border: solid #bbb; border-width: 0 0 1px 1px; }
.list label:first-child::before { top: 6px; height: 1px; border-left: 0; }
.list input { position: relative; width: 9px; height: 9px; appearance: none; border: 1px solid #888; background: #fff; }
.list input:checked::after { content: ""; position: absolute; left: 2px; top: 0; width: 3px; height: 5px; border: solid #111; border-width: 0 1px 1px 0; transform: rotate(40deg); }
.actions { display: flex; justify-content: flex-end; gap: 8px; margin-top: 13px; }
.actions button { width: 52px; height: 16px; border: 1px solid #ccc; border-radius: 2px; background: #fdfdfd; }
.actions .ok { border-color: #0067c0; }
.grip { position: absolute; right: 1px; bottom: 1px; width: 6px; height: 6px; }
```
